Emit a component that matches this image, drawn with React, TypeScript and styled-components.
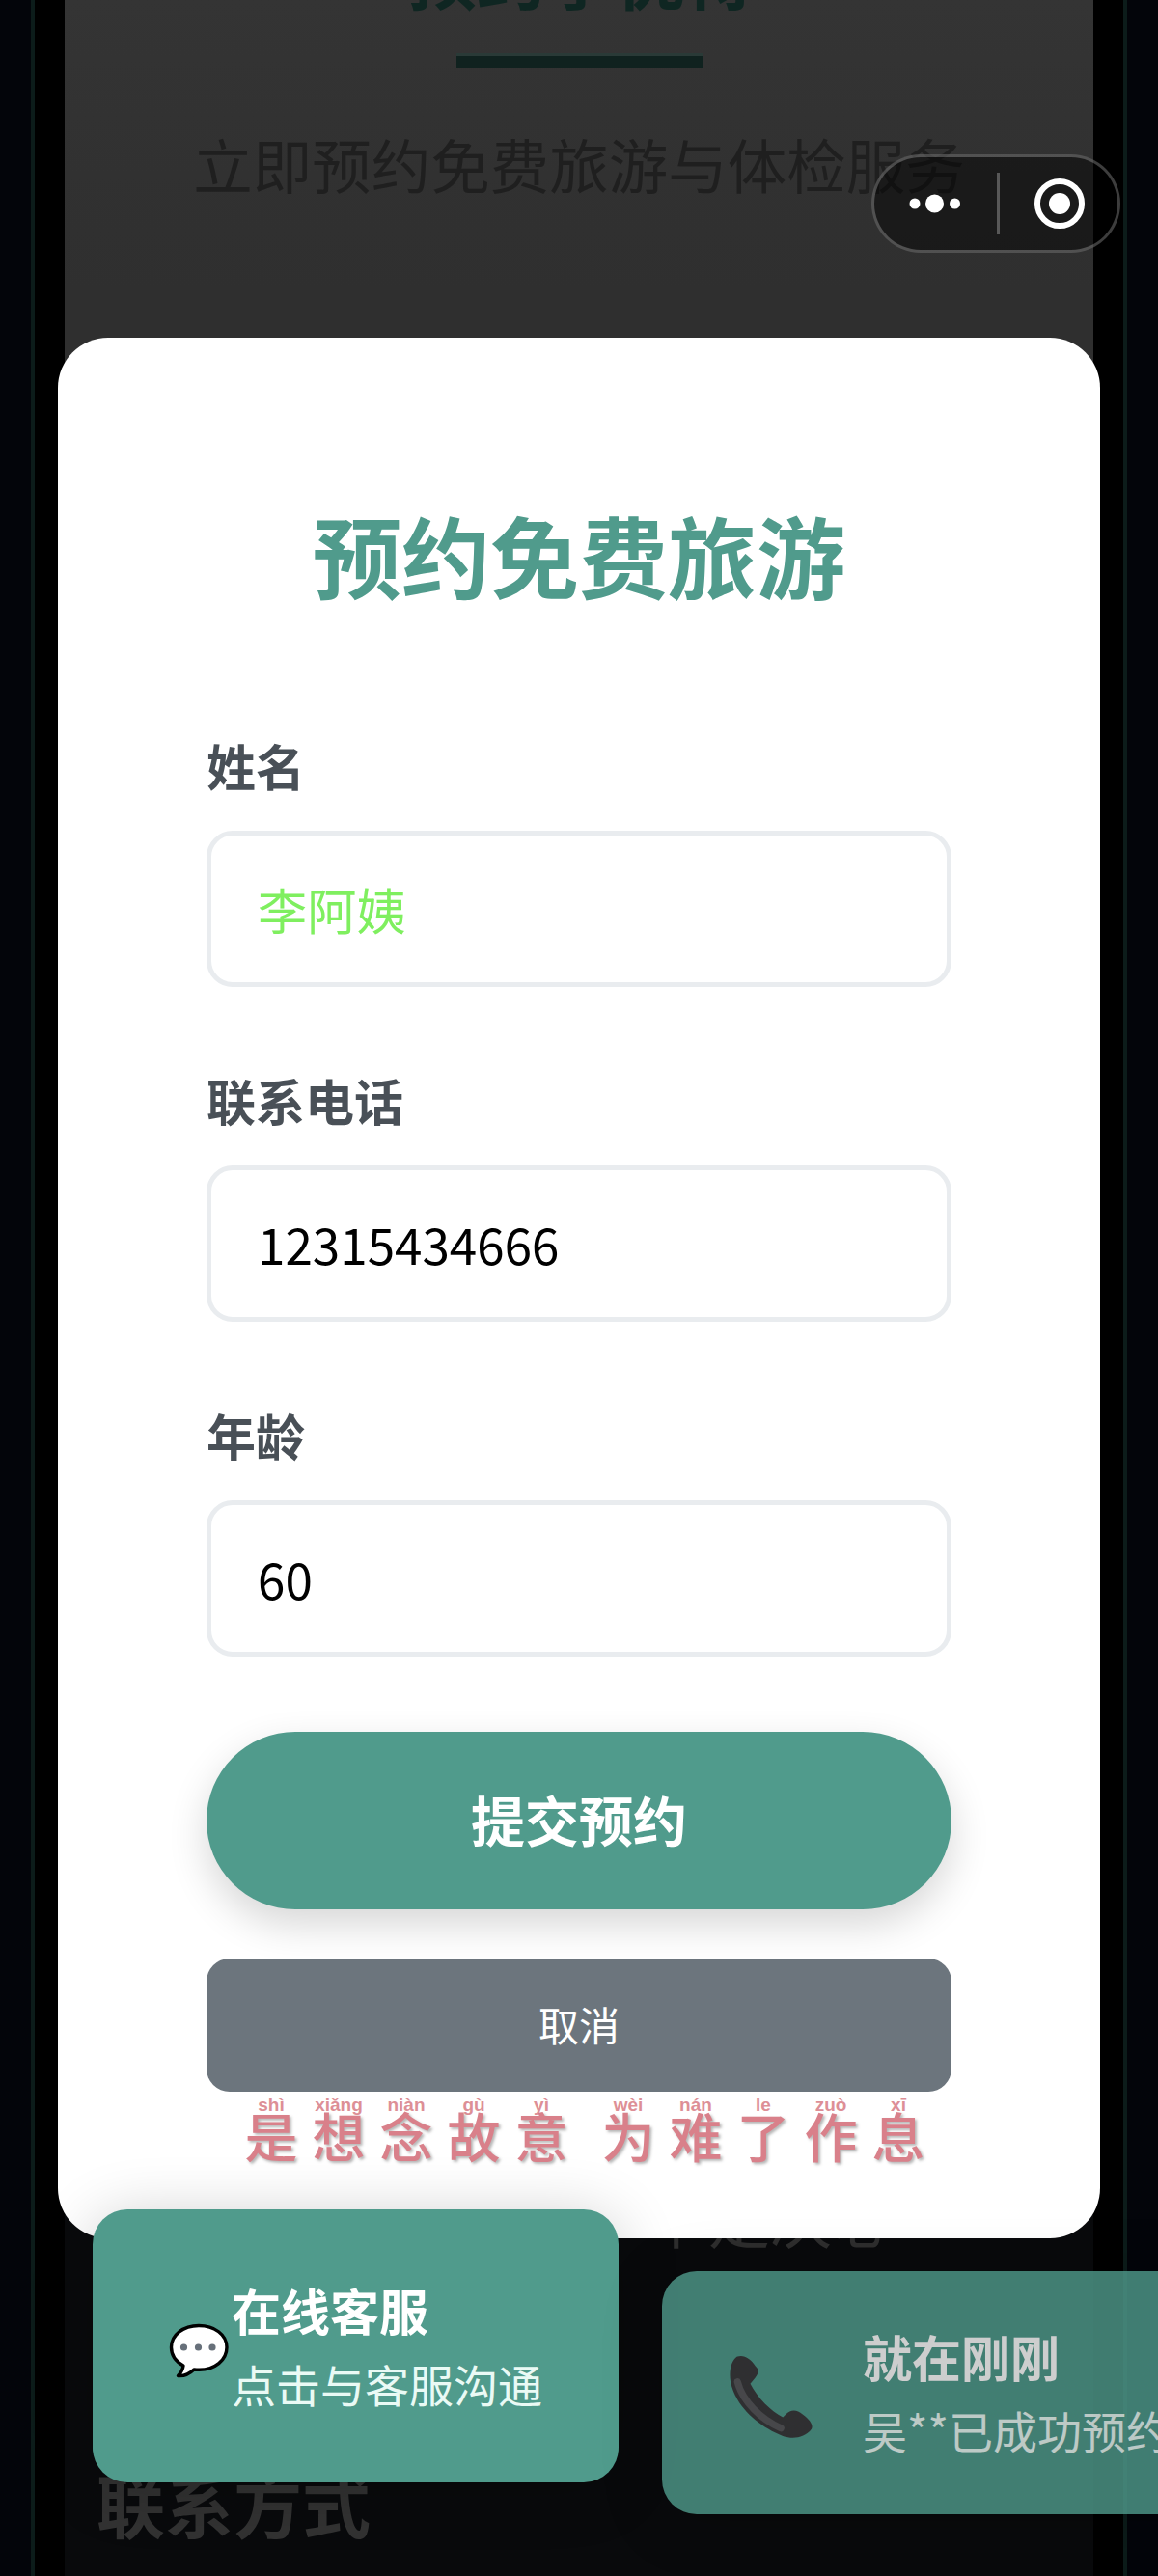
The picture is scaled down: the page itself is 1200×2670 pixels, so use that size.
import React from "react";
import styled, { createGlobalStyle } from "styled-components";

const GlobalStyle = createGlobalStyle`
  html, body {
    margin: 0;
    padding: 0;
    background: #020308;
  }
  * {
    box-sizing: border-box;
  }
`;

const fields = [
  { label: "姓名", value: "李阿姨", accent: true },
  { label: "联系电话", value: "12315434666", accent: false },
  { label: "年龄", value: "60", accent: false },
];

const slogan = [
  [
    ["shì", "是"],
    ["xiǎng", "想"],
    ["niàn", "念"],
    ["gù", "故"],
    ["yì", "意"],
  ],
  [
    ["wèi", "为"],
    ["nán", "难"],
    ["le", "了"],
    ["zuò", "作"],
    ["xī", "息"],
  ],
];

function App() {
  return (
    <Screen>
      <GlobalStyle />
      <Rail />
      <RailLine />
      <Gutter />
      <PageColumn>
        <TopSection>
          <PageTitle>预约享优待</PageTitle>
          <TitleRule />
          <PageSubtitle>立即预约免费旅游与体检服务</PageSubtitle>
        </TopSection>
        <BottomSection>
          <HiddenLine>下定决心</HiddenLine>
          <ContactTitle>联系方式</ContactTitle>
        </BottomSection>
      </PageColumn>
      <Gutter />
      <RailLine />
      <Rail />

      <Capsule>
        <svg width="56" height="22" viewBox="0 0 56 22">
          <circle cx="7" cy="11" r="5.5" fill="#fff" />
          <circle cx="27.5" cy="11" r="9.5" fill="#fff" />
          <circle cx="48.5" cy="11" r="5.5" fill="#fff" />
        </svg>
        <CapsuleDivider />
        <svg width="52" height="52" viewBox="0 0 52 52">
          <circle cx="26" cy="26" r="23" fill="none" stroke="#fff" strokeWidth="6" />
          <circle cx="26" cy="26" r="11" fill="#fff" />
        </svg>
      </Capsule>

      <Modal>
        <ModalTitle>预约免费旅游</ModalTitle>
        <FieldList>
          {fields.map((field) => (
            <Field key={field.label}>
              <FieldLabel>{field.label}</FieldLabel>
              <InputBox $accent={field.accent}>{field.value}</InputBox>
            </Field>
          ))}
        </FieldList>
        <SubmitButton>提交预约</SubmitButton>
        <CancelButton>取消</CancelButton>
        <Slogan>
          {slogan.map((group, index) => (
            <SloganGroup key={index}>
              {group.map(([pinyin, han]) => (
                <SloganChar key={han}>
                  <Pinyin>{pinyin}</Pinyin>
                  <Han>{han}</Han>
                </SloganChar>
              ))}
            </SloganGroup>
          ))}
        </Slogan>
      </Modal>

      <ServiceCard>
        <ChatSlot>
          <svg width="62" height="58" viewBox="0 0 62 58">
            <path
              d="M31 2.5C15 2.5 2.5 12 2.5 25c0 8 5 15 12.500 19-.5 4-2.500 7.500-5.500 10.500 6 .5 12-2 16.500-6.500 1.800.2 3.500.3 5.500.3 16 0 28.500-10 28.500-23.300S47 2.500 31 2.500z"
              fill="#fff"
              stroke="#000"
              strokeWidth="3.4"
              strokeLinejoin="round"
            />
            <circle cx="15.500" cy="25" r="3.600" fill="#67707a" />
            <circle cx="30.500" cy="25" r="3.600" fill="#67707a" />
            <circle cx="45" cy="25" r="3.600" fill="#67707a" />
          </svg>
        </ChatSlot>
        <CardText>
          <CardTitle>在线客服</CardTitle>
          <CardSubtitle>点击与客服沟通</CardSubtitle>
        </CardText>
      </ServiceCard>

      <NoticeCard>
        <PhoneSlot>
          <svg width="90" height="90" viewBox="14 12 88 88">
            <path
              d="M24 14.500C18 17 15 29 17 40c5 25 28 45 53 55 10 3.500 22 2 29-7 2-4-1-9-9-15-6-5-12-5-17 0l-3 3C58 70 44 56 37 42l5-6c4-6 4-8 0-12-4-7-12-12-18-9.500z"
              fill="#39393b"
            />
            <path
              d="M24 40c5 20 24 38 44 47"
              fill="none"
              stroke="#57575a"
              strokeWidth="7"
              strokeLinecap="round"
            />
          </svg>
        </PhoneSlot>
        <CardText>
          <CardTitle>就在刚刚</CardTitle>
          <CardSubtitle>吴**已成功预约</CardSubtitle>
        </CardText>
      </NoticeCard>
    </Screen>
  );
}

const Screen = styled.div`
  position: relative;
  display: flex;
  width: 1200px;
  height: 2670px;
  overflow: hidden;
  background: #020308;
  font-family: "Noto Sans CJK SC", "Noto Sans", sans-serif;
`;

const Rail = styled.div`
  width: 32px;
  background: #03050a;
`;

const RailLine = styled.div`
  width: 4px;
  background: #0c1c1a;
`;

const Gutter = styled.div`
  width: 31px;
  background: #000;
`;

const PageColumn = styled.div`
  flex: 1;
  display: flex;
  flex-direction: column;
`;

const TopSection = styled.section`
  height: 1000px;
  display: flex;
  flex-direction: column;
  align-items: center;
  background: linear-gradient(#343434, #2f2f2f 30%);
`;

const PageTitle = styled.h2`
  margin: -79px 0 0 4px;
  font-size: 72px;
  line-height: 104px;
  font-weight: 700;
  color: #0f2622;
`;

const TitleRule = styled.div`
  width: 255px;
  height: 12px;
  margin-top: 33px;
  background: #10221f;
  box-shadow: 0 -3px 0 #2a3a37;
`;

const PageSubtitle = styled.p`
  margin: 56px 0 0;
  font-size: 61.500px;
  line-height: 88px;
  font-weight: 400;
  color: #1f1f1f;
`;

const BottomSection = styled.section`
  flex: 1;
  display: flex;
  flex-direction: column;
  padding: 1253px 0 0 33px;
  background: #090a0c;
`;

const HiddenLine = styled.div`
  margin-left: 570px;
  font-size: 64px;
  line-height: 88px;
  color: #2e2e2e;
`;

const ContactTitle = styled.h3`
  margin: 201px 0 0;
  font-size: 71px;
  line-height: 104px;
  font-weight: 700;
  color: #323232;
`;

const Capsule = styled.div`
  position: absolute;
  top: 160px;
  left: 903px;
  width: 258px;
  height: 102px;
  display: flex;
  align-items: center;
  justify-content: center;
  gap: 36px;
  border: 3px solid rgba(255, 255, 255, 0.24);
  border-radius: 51px;
  background: rgba(0, 0, 0, 0.45);
`;

const CapsuleDivider = styled.div`
  width: 3px;
  height: 64px;
  background: #585858;
`;

const Modal = styled.div`
  position: absolute;
  top: 350px;
  left: 60px;
  width: 1080px;
  height: 1970px;
  display: flex;
  flex-direction: column;
  padding: 0 154px;
  border-radius: 52px;
  background: #fff;
`;

const ModalTitle = styled.h2`
  margin: 168px 0 128px;
  text-align: center;
  font-size: 92px;
  line-height: 112px;
  font-weight: 700;
  color: #509b8c;
`;

const FieldList = styled.div`
  display: flex;
  flex-direction: column;
  gap: 82px;
  margin-bottom: 78px;
`;

const Field = styled.div`
  display: flex;
  flex-direction: column;
`;

const FieldLabel = styled.label`
  height: 70px;
  margin-bottom: 33px;
  font-size: 51px;
  line-height: 70px;
  font-weight: 700;
  color: #495057;
`;

const InputBox = styled.div<{ $accent: boolean }>`
  height: 162px;
  display: flex;
  align-items: center;
  padding: 0 48px;
  border: 5px solid #e9ecef;
  border-radius: 27px;
  font-size: 51.200px;
  color: ${(p) => (p.$accent ? "#7fef5f" : "#000")};
`;

const SubmitButton = styled.div`
  height: 184px;
  display: flex;
  align-items: center;
  justify-content: center;
  padding-bottom: 5px;
  border-radius: 92px;
  background: #509b8c;
  box-shadow: 0 16px 40px rgba(0, 0, 0, 0.16);
  font-size: 56px;
  font-weight: 700;
  color: #fff;
`;

const CancelButton = styled.div`
  height: 138px;
  margin-top: 51px;
  display: flex;
  align-items: center;
  justify-content: center;
  padding-bottom: 3px;
  border-radius: 24px;
  background: #6c757d;
  font-size: 42px;
  color: #fff;
`;

const Slogan = styled.div`
  display: flex;
  justify-content: center;
  gap: 20px;
  margin: 4px -20px 0 -8px;
`;

const SloganGroup = styled.div`
  display: flex;
`;

const SloganChar = styled.div`
  width: 70px;
  display: flex;
  flex-direction: column;
  align-items: center;
`;

const Pinyin = styled.span`
  height: 20px;
  font-family: "Liberation Sans", sans-serif;
  font-size: 19px;
  line-height: 20px;
  font-weight: 700;
  color: #dd8f96;
  white-space: nowrap;
`;

const Han = styled.span`
  margin-top: -8px;
  font-size: 55px;
  line-height: 56px;
  font-weight: 500;
  color: #d9808a;
  text-shadow: 2px 2px 3px rgba(90, 90, 90, 0.45);
`;

const Card = styled.div`
  position: absolute;
  display: flex;
  align-items: center;
  border-radius: 36px;
  background: #509b8c;
  box-shadow: 0 8px 64px rgba(0, 0, 0, 0.2);
`;

const ServiceCard = styled(Card)`
  top: 2290px;
  left: 96px;
  width: 545px;
  height: 283px;
  padding-left: 79px;
`;

const NoticeCard = styled(Card)`
  top: 2354px;
  left: 686px;
  width: 600px;
  height: 252px;
  padding-left: 68px;
  opacity: 0.8;
`;

const ChatSlot = styled.div`
  width: 65px;
  flex-shrink: 0;
  display: flex;
  padding-top: 10px;
`;

const PhoneSlot = styled.div`
  width: 140px;
  flex-shrink: 0;
  display: flex;
  padding-top: 10px;
`;

const CardText = styled.div`
  display: flex;
  flex-direction: column;
  white-space: nowrap;
`;

const CardTitle = styled.div`
  font-size: 51px;
  line-height: 76px;
  font-weight: 700;
  color: #fff;
`;

const CardSubtitle = styled.div`
  font-size: 46px;
  line-height: 76px;
  color: #eafaf5;
`;

export default App;
